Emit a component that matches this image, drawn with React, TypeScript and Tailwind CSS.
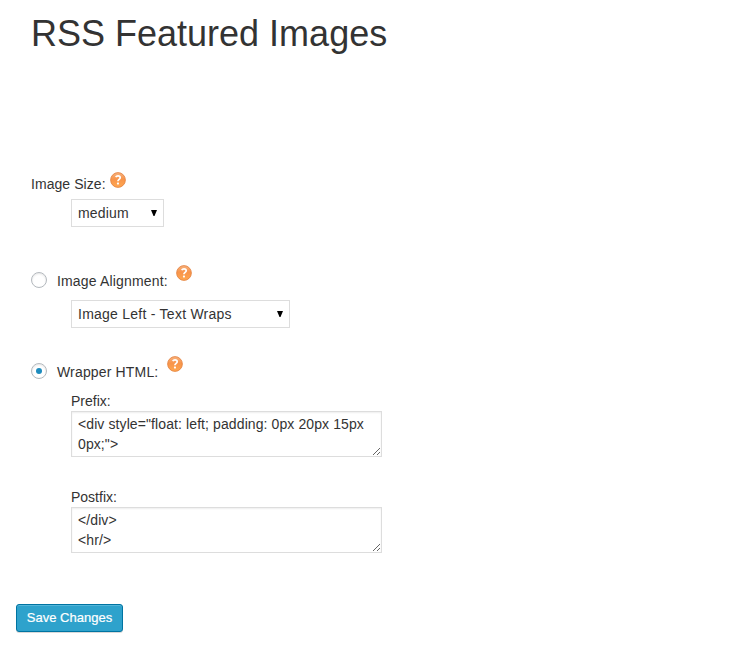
import React from "react";

function HelpIcon({ className = "" }: { className?: string }) {
  return (
    <svg className={`h-4 w-4 shrink-0 ${className}`} viewBox="0 0 16 16" role="img" aria-label="Help">
      <defs>
        <linearGradient id="orb" x1="0" y1="0" x2="0" y2="1">
          <stop offset="0" stopColor="#f7b27e" />
          <stop offset="0.45" stopColor="#f8944a" />
          <stop offset="1" stopColor="#ffa850" />
        </linearGradient>
      </defs>
      <circle cx="8" cy="8" r="7.4" fill="url(#orb)" stroke="#e2803f" strokeWidth="0.8" />
      <path d="M5.7 5.2C6.2 4.3 7 3.9 8 3.9c1.4 0 2.2.7 2.2 1.8 0 1.6-2.3 1.7-2.3 3.5" fill="none" stroke="#fff" strokeWidth="1.7" />
      <rect x="6.95" y="10.5" width="2" height="1.9" rx="0.4" fill="#fff" />
    </svg>
  );
}

function SelectBox({ value, width, tracking }: { value: string; width: string; tracking: string }) {
  return (
    <div className={`relative ml-10 h-7 ${width}`}>
      <select
        defaultValue={value}
        className={`block h-full w-full appearance-none border border-[#ddd] bg-white pl-1.5 text-sm leading-5 text-[#333] outline-none ${tracking}`}
      >
        <option>{value}</option>
      </select>
      <svg className="pointer-events-none absolute top-[11px] right-[7px] h-[6px] w-[6px]" viewBox="0 0 6 6">
        <path d="M0 0h6L3.5 6h-1z" fill="#000" />
      </svg>
    </div>
  );
}

function CodeArea({ value }: { value: string }) {
  return (
    <div className="relative h-[46px] w-[311px]">
      <textarea
        defaultValue={value}
        spellCheck={false}
        className="block h-full w-full resize-none overflow-hidden border border-[#ddd] bg-white px-1.5 py-0.5 text-sm leading-5 tracking-[0.1px] text-[#333] shadow-[inset_0_1px_2px_rgba(0,0,0,0.07)] outline-none"
      />
      <svg className="pointer-events-none absolute right-[2px] bottom-[2px] h-[7px] w-[7px]" viewBox="0 0 7 7" shapeRendering="crispEdges" fill="#666">
        {[0, 1, 2, 3, 4, 5, 6].map((i) => (
          <rect key={i} x={i} y={6 - i} width="1" height="1" />
        ))}
        {[4, 5, 6].map((i) => (
          <rect key={i} x={i} y={10 - i} width="1" height="1" />
        ))}
      </svg>
    </div>
  );
}

function Radio({ checked = false }: { checked?: boolean }) {
  return (
    <span
      role="radio"
      aria-checked={checked}
      className="mt-px mr-[10px] flex h-4 w-4 shrink-0 items-center justify-center rounded-full border border-[#b4b9be] bg-white shadow-[inset_0_1px_2px_rgba(0,0,0,0.1)]"
    >
      {checked && <span className="h-1.5 w-1.5 rounded-full bg-[#1e8cbe]" />}
    </span>
  );
}

export default function App() {
  return (
    <main className="h-[664px] w-[743px] overflow-hidden bg-white font-['Liberation_Sans',Arial,sans-serif] text-sm leading-5 tracking-[0.16px] text-[#333]">
      <h1 className="pt-[14px] pl-[31px] text-[36px] leading-10 tracking-[0px]">RSS Featured Images</h1>
      <div className="mt-[120px] ml-[31px]">
        <div className="flex h-[25px]">
          <span className="w-[79px] tracking-[0.06px] whitespace-nowrap">Image Size:</span>
          <HelpIcon className="-mt-[2px]" />
        </div>
        <SelectBox value="medium" width="w-[93px]" tracking="tracking-[0.16px]" />
        <div className="mt-11 flex h-[29px]">
          <Radio />
          <span className="w-[119px] whitespace-nowrap">Image Alignment:</span>
          <HelpIcon className="-mt-[6px]" />
        </div>
        <SelectBox value="Image Left - Text Wraps" width="w-[219px]" tracking="tracking-[0.25px]" />
        <div className="mt-[34px] flex h-[29px]">
          <Radio checked />
          <span className="w-[110px] whitespace-nowrap">Wrapper HTML:</span>
          <HelpIcon className="-mt-[6px]" />
        </div>
        <div className="ml-10 flex flex-col gap-[30px] tracking-[0px]">
          <div>
            <div>Prefix:</div>
            <CodeArea value={'<div style="float: left; padding: 0px 20px 15px 0px;">'} />
          </div>
          <div>
            <div>Postfix:</div>
            <CodeArea value={"</div>\n<hr/>"} />
          </div>
        </div>
      </div>
      <button className="mt-[51px] ml-4 block h-7 w-[107px] rounded-[3px] border border-[#0074a2] bg-[#2ea2cc] text-[13px] leading-[26px] tracking-[0px] whitespace-nowrap text-white shadow-[inset_0_1px_0_rgba(120,200,230,0.5),0_1px_0_rgba(0,0,0,0.15)] [-webkit-text-stroke:0.2px_white]">
        Save Changes
      </button>
    </main>
  );
}
